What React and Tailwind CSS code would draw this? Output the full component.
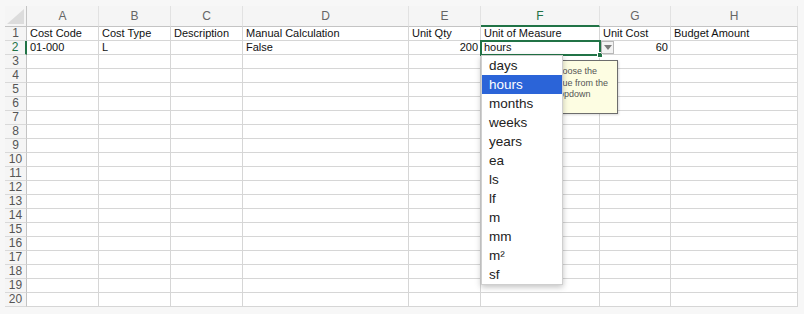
import React from "react";

const cols = ["A", "B", "C", "D", "E", "F", "G", "H"];
const row1 = ["Cost Code", "Cost Type", "Description", "Manual Calculation", "Unit Qty", "Unit of Measure", "Unit Cost", "Budget Amount"];
const row2 = ["01-000", "L", "", "False", "200", "hours", "60", ""];
const right2 = [false, false, false, false, true, false, true, false];
const options = ["days", "hours", "months", "weeks", "years", "ea", "ls", "lf", "m", "mm", "m²", "sf"];

export default function App() {
  const rows = Array.from({ length: 20 }, (_, i) => i + 1);
  return (
    <div
      className="relative w-[804px] h-[314px] bg-[#f7f7f7] pl-[5px] pt-[6px] overflow-hidden"
      style={{ fontFamily: '"Liberation Sans", Arial, sans-serif' }}
    >
      <div className="grid grid-cols-[22px_72px_72px_72px_166px_72px_119px_71px_127px] w-[793px] bg-white text-[11px] leading-[13px] text-[#111]">
        <div className="h-[21px] bg-[#f5f5f5] border-b border-r border-[#c4c4c4] relative overflow-hidden">
          <div className="absolute right-[2px] bottom-[2px] w-0 h-0 border-l-[17px] border-l-transparent border-b-[15px] border-b-[#dcdcdc]" />
        </div>
        {cols.map((c) => (
          <div
            key={c}
            className={
              c === "F"
                ? "h-[21px] bg-[#f5f5f5] border-r border-r-[#e2e2e2] border-b-2 border-b-[#217346] text-[#217346] flex items-center justify-center text-[12px] pt-[1px]"
                : "h-[21px] bg-[#f5f5f5] border-r border-r-[#e2e2e2] border-b border-b-[#c4c4c4] text-[#666] flex items-center justify-center text-[12px]"
            }
          >
            {c}
          </div>
        ))}
        {rows.map((r) => (
          <React.Fragment key={r}>
            <div
              className={
                r === 2
                  ? "h-[14px] bg-[#f5f5f5] border-b border-b-[#d9d9d9] border-r-2 border-r-[#217346] text-[#217346] flex items-center justify-center text-[12px]"
                  : "h-[14px] bg-[#f5f5f5] border-b border-b-[#d9d9d9] border-r border-r-[#c4c4c4] text-[#555] flex items-center justify-center text-[12px]"
              }
            >
              {r}
            </div>
            {cols.map((c, ci) => {
              let text = "";
              let right = false;
              if (r === 1) text = row1[ci];
              if (r === 2) {
                text = row2[ci];
                right = right2[ci];
              }
              return (
                <div
                  key={c}
                  className={
                    right
                      ? "h-[14px] border-b border-r border-[#d6d6d6] px-[2px] flex items-center justify-end whitespace-nowrap overflow-hidden"
                      : "h-[14px] border-b border-r border-[#d6d6d6] px-[3px] flex items-center whitespace-nowrap overflow-hidden"
                  }
                >
                  {text}
                </div>
              );
            })}
          </React.Fragment>
        ))}
      </div>

      {/* selection border on F2 */}
      <div className="absolute left-[480px] top-[40px] w-[121px] h-[16px] border-2 border-[#217346]" />
      <div className="absolute left-[597px] top-[52px] w-[6px] h-[6px] bg-[#217346] border border-white" />

      {/* dropdown arrow button */}
      <div className="absolute left-[601px] top-[41px] w-[13px] h-[13px] bg-[#f3f3f3] border border-[#b8b8b8] flex items-center justify-center">
        <div className="w-0 h-0 border-l-[4px] border-l-transparent border-r-[4px] border-r-transparent border-t-[5px] border-t-[#7a7a7a]" />
      </div>

      {/* tooltip */}
      <div className="absolute left-[546px] top-[60px] w-[72px] h-[54px] bg-[#fdfde2] border border-[#6d6d6d] px-[4px] pt-[5px] text-[9px] leading-[11.5px] text-[#555] shadow-[1px_1px_2px_rgba(0,0,0,0.15)]">
        Choose the
        <br />
        value from the
        <br />
        dropdown
      </div>

      {/* dropdown list */}
      <div className="absolute left-[481px] top-[55px] w-[82px] h-[230px] bg-white border border-[#cfcfcf] shadow-[0_2px_6px_rgba(0,0,0,0.25)] text-[13.5px] text-[#222]">
        {options.map((o) => (
          <div
            key={o}
            className={
              o === "hours"
                ? "h-[19px] pl-[7px] pt-[1px] flex items-center bg-[#2b64d8] text-white"
                : "h-[19px] pl-[7px] pt-[1px] flex items-center"
            }
          >
            {o}
          </div>
        ))}
      </div>
    </div>
  );
}
